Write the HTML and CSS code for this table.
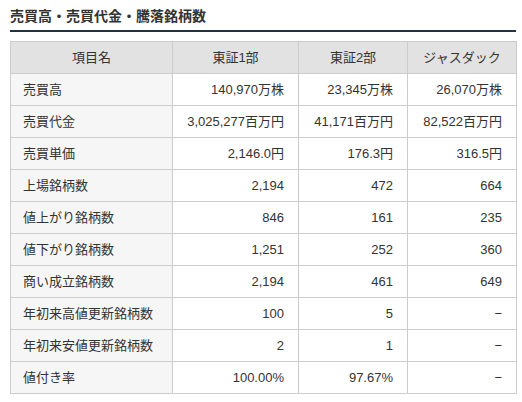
FILE: index.html
```html
<!DOCTYPE html>
<html lang="ja">
<head>
<meta charset="utf-8">
<link rel="stylesheet" href="styles.css">
</head>
<body>
<div class="wrap">
  <h2 class="title">売買高・売買代金・騰落銘柄数</h2>
  <table class="tbl">
    <colgroup>
      <col class="c1"><col class="c2"><col class="c3"><col class="c4">
    </colgroup>
    <thead>
      <tr><th>項目名</th><th>東証1部</th><th>東証2部</th><th>ジャスダック</th></tr>
    </thead>
    <tbody>
      <tr><th>売買高</th><td>140,970万株</td><td>23,345万株</td><td>26,070万株</td></tr>
      <tr><th>売買代金</th><td>3,025,277百万円</td><td>41,171百万円</td><td>82,522百万円</td></tr>
      <tr><th>売買単価</th><td>2,146.0円</td><td>176.3円</td><td>316.5円</td></tr>
      <tr><th>上場銘柄数</th><td>2,194</td><td>472</td><td>664</td></tr>
      <tr><th>値上がり銘柄数</th><td>846</td><td>161</td><td>235</td></tr>
      <tr><th>値下がり銘柄数</th><td>1,251</td><td>252</td><td>360</td></tr>
      <tr><th>商い成立銘柄数</th><td>2,194</td><td>461</td><td>649</td></tr>
      <tr><th>年初来高値更新銘柄数</th><td>100</td><td>5</td><td>&minus;</td></tr>
      <tr><th>年初来安値更新銘柄数</th><td>2</td><td>1</td><td>&minus;</td></tr>
      <tr><th>値付き率</th><td>100.00%</td><td>97.67%</td><td>&minus;</td></tr>
    </tbody>
  </table>
</div>
</body>
</html>
```
FILE: styles.css
```css
html, body {
  margin: 0;
  padding: 0;
  background: #fff;
}
body {
  font-family: "Liberation Sans", "Noto Sans CJK JP", sans-serif;
  color: #333;
}
.wrap {
  padding: 6px 6px 0 10px;
  width: 506px;
}
.title {
  margin: 0;
  font-size: 14px;
  font-weight: bold;
  line-height: 20px;
  padding-bottom: 4px;
  border-bottom: 2px solid #1e3442;
  color: #333;
}
.tbl {
  margin-top: 9px;
  width: 506px;
  border-collapse: collapse;
  table-layout: fixed;
  font-size: 13px;
}
.c1 { width: 162px; }
.c2 { width: 126px; }
.c3 { width: 109px; }
.c4 { width: 109px; }
.tbl th, .tbl td {
  border: 1px solid #cccccc;
  height: 31px;
  padding: 0 14px 0 12px;
  font-weight: normal;
  line-height: 16px;
}
.tbl thead th {
  background: #e2e2e2;
  text-align: center;
  padding: 0;
}
.tbl tbody th {
  background: #f6f6f6;
  text-align: left;
}
.tbl tbody td {
  text-align: right;
  background: #fff;
}
```
